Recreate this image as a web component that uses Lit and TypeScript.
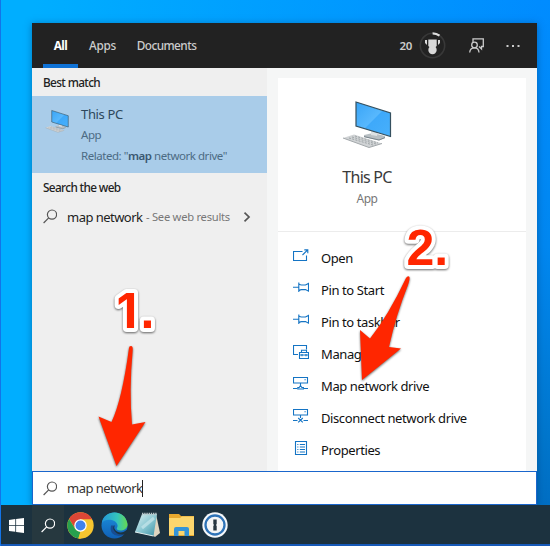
import { LitElement, html, css, svg } from "lit";
import { customElement } from "lit/decorators.js";

const lens = (color: string) => svg`<g fill="none" stroke=${color} stroke-width="1.2"><circle cx="9" cy="5.6" r="4.6"/><path d="M5.7 8.9 L.6 14"/></g>`;

const computer = (w: number, h: number) => html`<svg width=${w} height=${h} viewBox="0 0 50 48">
  <defs><linearGradient id="scr" x1="0" y1="0" x2="1" y2="1"><stop offset="0" stop-color="#38a4f6"/><stop offset=".5" stop-color="#58b8fd"/><stop offset=".52" stop-color="#3ea9fa"/><stop offset="1" stop-color="#48b0fb"/></linearGradient></defs>
  <path d="M22 34 L31 32 L43 35 L43 37 L37 39.5 L22 36 Z" fill="#b8bfc3"/>
  <path d="M29 30 L36 31 L35 35 L29 34 Z" fill="#dde2e4"/>
  <path d="M22 35.6 L37 39 L43 36.6" fill="none" stroke="#77838a"/>
  <path d="M14 1 L48.5 12 V35.5 L14 25 Z" fill="url(#scr)" stroke="#35505f" stroke-width="1.2"/>
  <path d="M1 37 L12 33.5 L40 42.5 L27 46.5 Z" fill="#d0d3d5"/>
  <path d="M1 37 L27 46.5 L40 42.5" fill="none" stroke="#a3a8ab"/>
  <path d="M7 37 L31 44 M10 36 L34 43 M13 35 L36 42" stroke="#92989b" stroke-width=".8" stroke-dasharray="2 1.3" fill="none"/>
</svg>`;

const menuIcons: Record<string, unknown> = {
  open: svg`<path d="M9.5 2.5H.5V11.5H13.5V6.5"/><path d="M9.5 6 L14.7.8 M11.3.9H14.8V4.3"/>`,
  pin: svg`<path d="M0 6.2H5.5M5.8 1.5V11 M5.8 3 Q7.5 4 8.5 4H12.5L15.5 2.4V10.2L12.5 8.6H8.5Q7.5 8.6 5.8 9.8" />`,
  manage: svg`<path d="M5 9.5H.5V.5H13.5V4.5"/><path d="M6.5 7.5H15.5V13.5H6.5ZM8.5 7V5.2H13.5V7M6.5 10H15.5M9 9V11.2M13 9V11.2"/>`,
  map: svg`<path d="M.5 .5H14.5V6H.5ZM7.5 6V8.4M0 11.5H4.2M11 11.5H15M11.5 2.7H12.7"/><path d="M4.8 12 V10.5H6.2L7.5 8.5L8.8 10.5H10.4V12Z"/>`,
  disconnect: svg`<path d="M.5 .5H14.5V6H.5ZM7.5 6V9M0 11.5H4.5M10.5 11.5H15M11.5 2.7H12.7M5.2 9L9.8 13.4M9.8 9L5.2 13.4"/>`,
  props: svg`<path d="M2.5.5H13.5V13.5H2.5ZM4.3 3.5H5.4M6.8 3.5H12M4.3 6H5.4M6.8 6H12M4.3 8.5H5.4M6.8 8.5H12M4.3 11H5.4M6.8 11H12"/>`,
};

const actions: [string, string][] = [
  ["open", "Open"], ["pin", "Pin to Start"], ["pin", "Pin to taskbar"], ["manage", "Manage"],
  ["map", "Map network drive"], ["disconnect", "Disconnect network drive"], ["props", "Properties"],
];

@customElement("search-header")
class SearchHeader extends LitElement {
  static styles = css`
    :host { display: flex; height: 45px; background: #222; color: #ccc; box-sizing: border-box; padding-left: 11px; font-size: 11.8px; font-weight: 500; letter-spacing: -.55px; }
    .tab { display: flex; justify-content: center; align-items: center; box-sizing: border-box; border-bottom: 4px solid transparent; padding-top: 2px; }
    .all { width: 35px; color: #fff; font-weight: 700; border-color: #0f72d6; letter-spacing: -.5px; }
    .apps { width: 49px; letter-spacing: -.3px; }
    .docs { width: 79px; }
    .tools { margin-left: auto; display: flex; align-items: center; }
    .points { font-weight: 600; font-size: 11.5px; margin-right: 7px; letter-spacing: -.3px; }
    .cup { margin-right: 23px; }
    .person { margin-right: 22px; }
    .dots { margin-right: 17px; }
  `;
  render() {
    return html`<div class="tab all">All</div><div class="tab apps">Apps</div><div class="tab docs">Documents</div>
      <div class="tools"><span class="points">20</span>
      <svg class="cup" width="27" height="27" viewBox="0 0 27 27"><circle cx="13.5" cy="13.5" r="12.2" fill="none" stroke="#383838" stroke-width="1.6"/><path d="M13.6 1.3 Q17.5 1.3 20.5 3.7" fill="none" stroke="#ddd" stroke-width="2.2"/><path d="M9.3 7.5H17.7V14L15.5 16H11.5L9.3 14ZM6 8H8V13L6 11ZM19 8H21V11L19 13Z" fill="#d8d8d8"/><circle cx="13.5" cy="18" r="4.2" fill="#d8d8d8"/></svg>
      <svg class="person" width="15" height="15" viewBox="0 0 15 15" fill="none" stroke="#ccc" stroke-width="1.3"><path d="M4 4V.8H14.3V8.5H12.5V11L10 8.5"/><circle cx="5.5" cy="7" r="2.8"/><path d="M.7 14.5Q1 9.9 5.5 9.9Q9.7 9.9 10 14.5"/></svg>
      <svg class="dots" width="14" height="4" viewBox="0 0 14 4" fill="#ccc"><path d="M.5 1H2.5V3H.5ZM6 1H8V3H6ZM11.5 1H13.5V3H11.5Z"/></svg></div>`;
  }
}

@customElement("result-list")
class ResultList extends LitElement {
  static styles = css`
    :host { display: block; width: 235px; background: #efefef; color: #222; }
    .head { height: 28px; box-sizing: border-box; padding: 1px 0 0 11px; line-height: 26px; font-size: 11.8px; font-weight: 500; letter-spacing: -.63px; }
    .best { height: 76.5px; background: #a9cce9; display: flex; padding: 13px 0 0 13px; box-sizing: border-box; gap: 12px; }
    .lines { display: flex; flex-direction: column; margin-top: -5px; }
    .lines div { height: 21px; line-height: 20px; font-size: 11.5px; color: #4c6b84; white-space: nowrap; letter-spacing: -.46px; }
    .lines .name { color: #2d475c; font-size: 13px; letter-spacing: -.35px; line-height: 21px; }
    b { font-weight: 600; color: #3a5871; }
    .web { display: flex; align-items: center; height: 32px; padding-left: 11px; white-space: nowrap; }
    .web svg { flex: none; }
    .query { margin-left: 10px; font-size: 13px; width: 79px; letter-spacing: -.53px; }
    .hint { font-size: 11.2px; color: #777; width: 97px; letter-spacing: -.26px; }
  `;
  render() {
    return html`<div class="head">Best match</div>
      <div class="best">${computer(24, 25)}<div class="lines"><div class="name">This PC</div><div>App</div><div>Related: "<b>map</b> network drive"</div></div></div>
      <div class="head">Search the web</div>
      <div class="web"><svg width="14" height="15" viewBox="0 0 14 15">${lens("#555")}</svg><span class="query">map network</span><span class="hint">- See web results</span><svg width="8" height="10" viewBox="0 0 8 10" fill="none" stroke="#555" stroke-width="1.7"><path d="M1.5.7L6 5L1.5 9.3"/></svg></div>`;
  }
}

@customElement("detail-pane")
class DetailPane extends LitElement {
  static styles = css`
    :host { display: block; flex: 1; background: #f5f6f6; padding: 10px 11px 0; }
    .card { height: 154px; background: #fff; border-bottom: 1px solid #ececec; padding: 23px 70px 0 0; box-sizing: border-box; text-align: center; color: #3a3a3a; }
    .card svg { display: block; margin: 0 auto; }
    .name { font-size: 16px; line-height: 22px; margin-top: 17px; letter-spacing: -.75px; }
    .kind { font-size: 12px; line-height: 20px; margin-top: 1px; color: #777; letter-spacing: -.5px; }
    .menu { background: #fff; height: 239px; padding-top: 10px; box-sizing: border-box; }
    .row { height: 32px; display: flex; align-items: center; padding-left: 15px; gap: 12px; font-size: 13px; color: #111; letter-spacing: -.4px; white-space: nowrap; }
    .row svg { flex: none; margin-top: -5px; fill: none; stroke: #1474c4; stroke-width: 1.1; }
  `;
  render() {
    return html`<div class="card">${computer(50, 48)}<div class="name">This PC</div><div class="kind">App</div></div>
      <div class="menu">${actions.map(([i, t]) => html`<div class="row"><svg width="16" height="14" viewBox="0 0 16 14">${menuIcons[i]}</svg><span>${t}</span></div>`)}</div>`;
  }
}

@customElement("task-bar")
class TaskBar extends LitElement {
  static styles = css`
    :host { display: flex; align-items: stretch; height: 41px; box-sizing: border-box; background: #1c323f; border-bottom: 2px solid #1659b8; margin-left: 1px; }
    .cell { display: flex; align-items: center; justify-content: center; width: 33.6px; padding-top: 1px; box-sizing: border-box; }
    .start { width: 31px; }
    .find { width: 32px; background: #26383f; }
  `;
  render() {
    return html`<div class="cell start"><svg width="15" height="15" viewBox="0 0 15 15" fill="#fff"><path d="M0 2L6.3 1.1V7H0ZM7.1 1L15 0V7H7.1ZM0 7.8H6.3V13.8L0 12.9ZM7.1 7.8H15V15L7.1 13.9Z"/></svg></div>
      <div class="cell find"><svg width="14" height="15" viewBox="0 0 14 15">${lens("#fff")}</svg></div>
      <div class="cell"><svg width="27" height="27" viewBox="0 0 26 26"><circle cx="13" cy="13" r="12.7" fill="#f6c62f"/><path d="M2 6.6A12.7 12.7 0 0 1 24.2 7H13L7.8 16Z" fill="#dc4636"/><path d="M2 6.7L7.8 16.2Q10 19.3 13 19L10.8 25.5A12.7 12.7 0 0 1 2 6.7Z" fill="#28a04e"/><path d="M18.2 16L12.8 25.7H11L13 19Z" fill="#f6c62f"/><circle cx="13" cy="13" r="6" fill="#fff"/><circle cx="13" cy="13" r="4.8" fill="#3f82ee"/></svg></div>
      <div class="cell"><svg width="27" height="27" viewBox="0 0 27 27"><defs><linearGradient id="e1" x1="0" x2="1"><stop stop-color="#2497d8"/><stop offset=".6" stop-color="#34c4bd"/><stop offset="1" stop-color="#66d84e"/></linearGradient><linearGradient id="e2" x1="0" y1="0" x2="0" y2="1"><stop stop-color="#1c91dc"/><stop offset="1" stop-color="#1060b6"/></linearGradient></defs>
        <circle cx="13.5" cy="13.5" r="13" fill="url(#e2)"/><path d="M1 11C2-2 24-4 26.5 12C27 18 19 20 16 17.5C15 16.5 17 15.5 16.5 13C15 7 4 6 1 11Z" fill="url(#e1)"/><path d="M10 13.5Q8 23 18 24Q22 24 24.5 21Q18 24 14.5 20Q12 17 13.6 13.5Z" fill="#174d93"/><path d="M13.7 13Q12 17 16 19.5Q21 22 26 17.7L27 20L24.5 22Q17 24 13.5 19Q11 16 13.7 13Z" fill="#1c323f"/></svg></div>
      <div class="cell"><svg width="27" height="26" viewBox="0 0 27 26"><defs><linearGradient id="np" x1="0" y1="0" x2="1" y2="1"><stop stop-color="#dff1f2"/><stop offset=".5" stop-color="#8bc8d3"/><stop offset="1" stop-color="#3b91a5"/></linearGradient></defs><path d="M22 2L26 21L21 25L18 23Z" fill="#ded5c0"/><path d="M8 2H23L19.5 24L1 20Z" fill="url(#np)"/><path d="M8 2H23" stroke="#b8c6ca" stroke-width="2.5" stroke-dasharray="1.4 .8"/><path d="M1 20L19.5 24" stroke="#e1eff0"/><path d="M8 16L20 6" stroke="#c8e7ec" opacity=".7" stroke-width="3"/></svg></div>
      <div class="cell"><svg width="25" height="24" viewBox="0 0 25 24"><path d="M0 3V1H10L12 3H25V23H0Z" fill="#e7a82e"/><path d="M0 5H11L13 3.5H25V22H0Z" fill="#fbd66d"/><path d="M5 23V16Q5 14 7 14H18Q20 14 20 16V23H15.5V18H9.5V23Z" fill="#3494d7"/></svg></div>
      <div class="cell"><svg width="26" height="26" viewBox="0 0 26 26"><circle cx="13" cy="13" r="12.7" fill="#f5f8fa"/><circle cx="13" cy="13" r="9.5" fill="#f4f6f7" stroke="#2e73b7" stroke-width="2.3"/><path d="M11.3 7.5H14.7V12L14 13L14.7 14V18.5H11.3V14L12 13L11.3 12Z" fill="#253641"/></svg></div>`;
  }
}

@customElement("app-root")
class AppRoot extends LitElement {
  static styles = css`
    :host { display: flex; flex-direction: column; position: relative; width: 550px; height: 546px; overflow: hidden; box-sizing: border-box; padding-top: 23px; font-family: "Noto Sans", "Open Sans", sans-serif; background: linear-gradient(90deg, #1374e8 0 1px, transparent 1px), linear-gradient(90deg, #00aeff 0 6%, transparent 98%), linear-gradient(180deg, #008cff, #0087f0 45%, #0076cc 80%, #0069bd); }
    .window { width: 505px; margin-left: 32px; height: 482px; box-shadow: 0 1px 7px #003a7080; }
    .body { display: flex; height: 403px; }
    .search { box-sizing: border-box; height: 34px; display: flex; align-items: center; padding-left: 10px; gap: 10px; background: #fff; border: 1px solid #1a66cc; font-size: 13px; color: #333; letter-spacing: -.53px; }
    .typed { border-right: 1px solid #222; line-height: 17px; }
    .notes { position: absolute; left: 0; top: 0; filter: drop-shadow(0 1px 1.2px #0009); }
    .num { font: 700 50px "Liberation Sans", Arial, sans-serif; fill: #ff2600; stroke: #fff; stroke-width: 8px; stroke-linejoin: round; paint-order: stroke; }
    .one { font: 700 48px Inter, sans-serif; }
  `;
  render() {
    return html`<div class="window"><search-header></search-header>
        <div class="body"><result-list></result-list><detail-pane></detail-pane></div>
        <div class="search"><svg width="14" height="15" viewBox="0 0 14 15">${lens("#555")}</svg><span class="typed">map network</span></div></div>
      <task-bar></task-bar>
      <svg class="notes" width="550" height="546" viewBox="0 0 550 546">
        <text class="num" y="328"><tspan class="one" x="116.5">1</tspan><tspan x="140.5">.</tspan></text><text class="num" x="406.5" y="265">2.</text>
        <path fill="#ff2600" d="M129 348Q129 346 131 346Q133 346 132.7 350Q129 390 132 424.5L145.5 422L116.5 466L98.5 416.5L111.5 422Q122 400 129 348Z"/>
        <path fill="#ff2600" d="M406 278Q408 275 409.5 277Q410 279 408 285Q396 315 389 347L401 348.5L362 380L360 330L370 338.5Q388 316 406 278Z"/>
      </svg>`;
  }
}
